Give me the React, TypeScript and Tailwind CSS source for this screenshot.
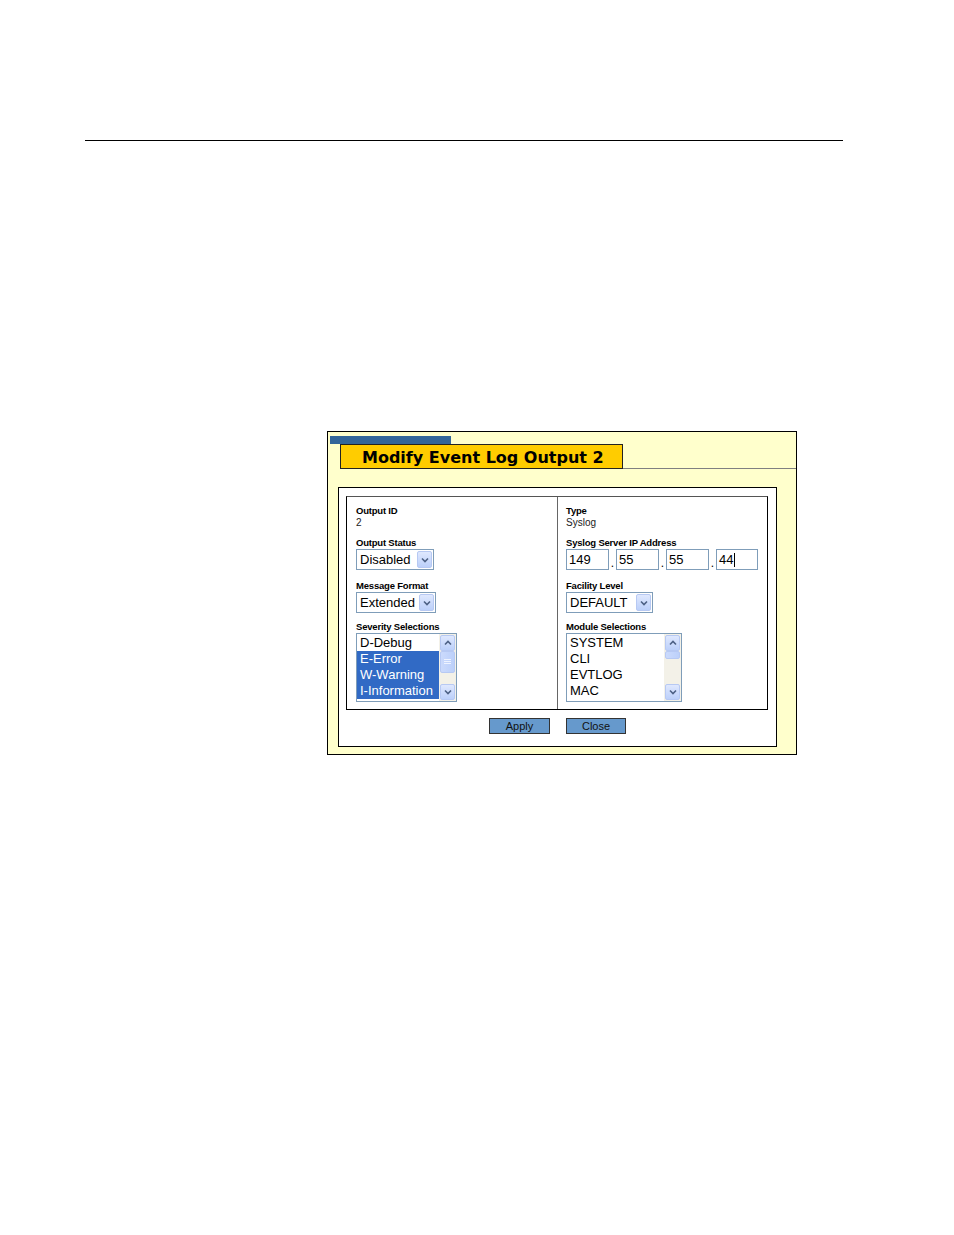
import React from "react";

const sans = "font-['Liberation_Sans',Arial,sans-serif]";

function Chevron({ up = false }: { up?: boolean }) {
  return (
    <svg width="8" height="6" viewBox="0 0 8 6" className="block">
      <path
        d={up ? "M1 4.5 L4 1.5 L7 4.5" : "M1 1.5 L4 4.5 L7 1.5"}
        fill="none"
        stroke="#4d6185"
        strokeWidth="1.6"
      />
    </svg>
  );
}

function ArrowButton({ up = false, className = "" }: { up?: boolean; className?: string }) {
  return (
    <div
      className={`flex items-center justify-center rounded-[2px] border border-[#b7c9f3] bg-gradient-to-b from-[#dfe8fe] to-[#bcd0fa] ${className}`}
    >
      <Chevron up={up} />
    </div>
  );
}

function Label({ children, className = "" }: { children: React.ReactNode; className?: string }) {
  return (
    <div className={`h-[11px] text-[9.5px] font-bold leading-[11px] tracking-[-0.2px] text-black ${className}`}>
      {children}
    </div>
  );
}

function Value({ children }: { children: React.ReactNode }) {
  return <div className="mt-[1px] h-[11px] text-[10px] leading-[11px] text-[#222]">{children}</div>;
}

function SelectBox({ value, width }: { value: string; width: string }) {
  return (
    <div className={`mt-[1px] flex h-[21px] items-center justify-between border border-[#7f9db9] bg-white ${width}`}>
      <span className="pl-[3px] text-[13px] leading-[16px] text-black">{value}</span>
      <ArrowButton className="mr-[1px] h-[17px] w-[15px]" />
    </div>
  );
}

interface ListItem {
  label: string;
  selected?: boolean;
}

function ListBox({ items, width, thumb }: { items: ListItem[]; width: string; thumb: string }) {
  return (
    <div className={`mt-[1px] flex h-[69px] border border-[#7f9db9] bg-white ${width}`}>
      <div className="flex-1 pt-px">
        {items.map((item) => (
          <div
            key={item.label}
            className={`h-[16px] whitespace-nowrap pl-[3px] text-[13px] leading-[16px] ${
              item.selected ? "bg-[#316ac5] text-white" : "text-black"
            }`}
          >
            {item.label}
          </div>
        ))}
      </div>
      {/* scrollbar */}
      <div className="flex w-[17px] flex-col bg-[#f3f1e8] p-px">
        <ArrowButton up className="h-[16px]" />
        <div
          className={`flex items-center justify-center rounded-[2px] border border-[#b7c9f3] bg-gradient-to-r from-[#cbdafc] to-[#bcd0fa] ${thumb}`}
        >
          {thumb === "h-[22px]" && (
            <svg width="7" height="6" viewBox="0 0 7 6" className="block">
              <path d="M0 0.5 H7 M0 2.5 H7 M0 4.5 H7" stroke="#eef3ff" strokeWidth="1" />
            </svg>
          )}
        </div>
        <div className="flex-1" />
        <ArrowButton className="h-[16px]" />
      </div>
    </div>
  );
}

function IpField({ value, caret = false, width = "w-[43px]" }: { value: string; caret?: boolean; width?: string }) {
  return (
    <div className={`flex h-[21px] items-center border border-[#7f9db9] bg-white pl-[2px] ${width}`}>
      <span className="text-[13px] leading-[16px] text-black">{value}</span>
      {caret && <span className="ml-px h-[14px] w-px bg-black" />}
    </div>
  );
}

function Dot() {
  return <span className="flex h-[21px] w-[7px] items-end justify-center pb-[1px] text-[12px] leading-[12px]">.</span>;
}

export default function App() {
  return (
    <div className={`h-[1235px] w-[954px] bg-white pt-[140px] ${sans}`}>
      <div className="ml-[85px] h-px w-[758px] bg-black" />

      <div className="ml-[327px] mt-[290px] flex h-[324px] w-[470px] flex-col border border-black bg-[#ffffcc]">
        {/* title */}
        <div className="ml-[2px] mt-[4px] h-[8px] w-[121px] bg-[#336699]" />
        <div className="flex">
          <div className="ml-[12px] flex h-[25px] w-[283px] items-center border border-[#222] bg-[#ffcc00] pl-[21px] pt-[2px]">
            <span className="font-['DejaVu_Sans',Verdana,sans-serif] text-[16px] font-bold leading-[20px] text-black">
              Modify Event Log Output 2
            </span>
          </div>
          <div className="h-px flex-1 self-end bg-[#808080]" />
        </div>

        {/* form panel */}
        <div className="ml-[10px] mt-[18px] h-[260px] w-[439px] border border-black bg-white pt-[8px]">
          <div className="ml-[7px] flex h-[214px] w-[422px] border border-black border-t-[#555]">
            <div className="w-[211px] border-r border-[#666] pl-[9px] pt-[8px]">
              <Label>Output ID</Label>
              <Value>2</Value>
              <Label className="mt-[9px]">Output Status</Label>
              <SelectBox value="Disabled" width="w-[78px]" />
              <Label className="mt-[10px]">Message Format</Label>
              <SelectBox value="Extended" width="w-[80px]" />
              <Label className="mt-[8px]">Severity Selections</Label>
              <ListBox
                width="w-[101px]"
                thumb="h-[22px]"
                items={[
                  { label: "D-Debug" },
                  { label: "E-Error", selected: true },
                  { label: "W-Warning", selected: true },
                  { label: "I-Information", selected: true },
                ]}
              />
            </div>
            <div className="flex-1 pl-[8px] pt-[8px]">
              <Label>Type</Label>
              <Value>Syslog</Value>
              <Label className="mt-[9px]">Syslog Server IP Address</Label>
              <div className="mt-[1px] flex">
                <IpField value="149" />
                <Dot />
                <IpField value="55" />
                <Dot />
                <IpField value="55" />
                <Dot />
                <IpField value="44" caret width="w-[42px]" />
              </div>
              <Label className="mt-[10px]">Facility Level</Label>
              <SelectBox value="DEFAULT" width="w-[87px]" />
              <Label className="mt-[8px]">Module Selections</Label>
              <ListBox
                width="w-[116px]"
                thumb="h-[8px]"
                items={[{ label: "SYSTEM" }, { label: "CLI" }, { label: "EVTLOG" }, { label: "MAC" }]}
              />
            </div>
          </div>

          <div className="mt-[8px] flex justify-center gap-[16px]">
            <button className="h-[16px] w-[61px] border border-[#333] bg-[#6699cc] text-[11px] leading-[14px] text-[#111]">
              Apply
            </button>
            <button className="h-[16px] w-[60px] border border-[#333] bg-[#6699cc] text-[11px] leading-[14px] text-[#111]">
              Close
            </button>
          </div>
        </div>
      </div>
    </div>
  );
}
